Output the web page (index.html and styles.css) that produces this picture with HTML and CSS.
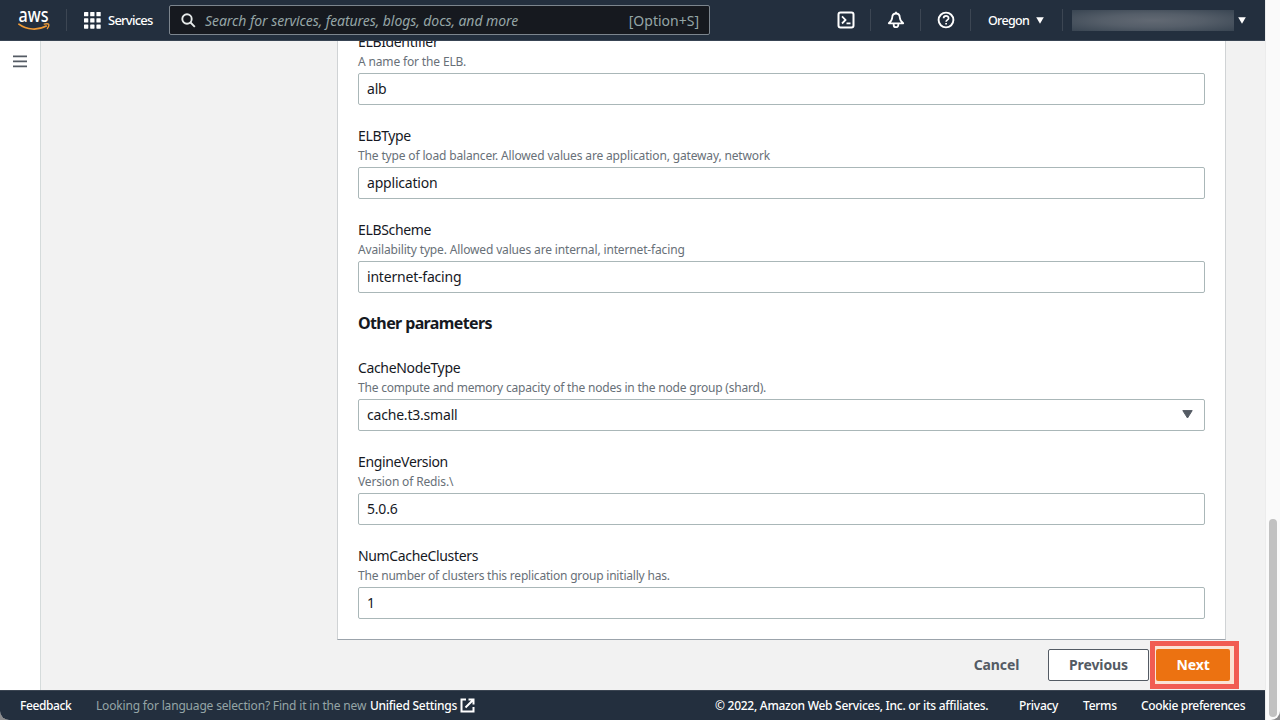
FILE: index.html
```
<!DOCTYPE html>
<html lang="en">
<head>
<meta charset="utf-8">
<title>Specify stack details</title>
<link rel="stylesheet" href="styles.css">
</head>
<body>
<div class="window">
  <div class="app">
    <header class="topbar">
      <svg class="logo" width="32" height="32" viewBox="0 -6 32 32">
        <text class="logo-text" x="0.6" y="11.5" textLength="30" lengthAdjust="spacingAndGlyphs">aws</text>
        <path d="M.9 14.200C8.500 20.200 20.500 20.400 28.300 16.100" fill="none" stroke="#f09a35" stroke-width="1.700" stroke-linecap="round"/>
        <path d="M26.200 14.200c1.900-.5 3.900-.5 4.500.1.400.9-.3 3-1.400 4.300" fill="none" stroke="#f09a35" stroke-width="1.300" stroke-linecap="round"/>
      </svg>
      <span class="rule after-logo"></span>
      <svg class="grid-icon" width="17" height="17" viewBox="0 0 17 17" fill="#fff">
        <rect width="4.300" height="4.300" rx=".6"/><rect x="6.200" width="4.300" height="4.300" rx=".6"/><rect x="12.400" width="4.300" height="4.300" rx=".6"/>
        <rect y="6.200" width="4.300" height="4.300" rx=".6"/><rect x="6.200" y="6.200" width="4.300" height="4.300" rx=".6"/><rect x="12.400" y="6.200" width="4.300" height="4.300" rx=".6"/>
        <rect y="12.400" width="4.300" height="4.300" rx=".6"/><rect x="6.200" y="12.400" width="4.300" height="4.300" rx=".6"/><rect x="12.400" y="12.400" width="4.300" height="4.300" rx=".6"/>
      </svg>
      <span class="services">Services</span>
      <div class="search">
        <svg width="15" height="15" viewBox="0 0 15 15" fill="none" stroke="#e6eaea" stroke-width="1.900"><circle cx="6" cy="6" r="4.700"/><path d="M9.500 9.500l4.300 4.300"/></svg>
        <span class="placeholder">Search for services, features, blogs, docs, and more</span>
        <span class="shortcut">[Option+S]</span>
      </div>
      <div class="tools">
        <div class="tool">
          <svg width="18" height="18" viewBox="0 0 18 18" fill="none" stroke="#fff" stroke-width="2"><rect x="1.500" y="1.500" width="15" height="15" rx="2"/><path d="M5 5.300L8.500 8.900 5 12.500M9.500 12.400h4" stroke-width="1.800"/></svg>
        </div>
        <div class="tool">
          <svg width="18" height="18" viewBox="0 0 18 18" fill="none" stroke="#fff" stroke-width="1.800" stroke-linejoin="round"><path d="M9 2.500C6.600 2.500 5.300 4 5.200 6.500 5 9.500 4 10.600 1.800 12.300h14.400C14 10.600 13 9.500 12.800 6.500 12.700 4 11.400 2.500 9 2.500zM9 .8v2M6.700 12.600v1.300a2.300 2.300 0 0 0 4.600 0v-1.300"/></svg>
        </div>
        <div class="tool">
          <svg width="18" height="18" viewBox="0 0 18 18" fill="none" stroke="#fff" stroke-width="1.900"><circle cx="9" cy="9" r="7.400"/><path d="M6.600 7.200c0-3.200 5-3.200 5 0 0 1.600-2.500 1.700-2.500 3.600M9.100 11.900v1.700" stroke-width="1.700"/></svg>
        </div>
        <div class="region"><span class="region-name">Oregon</span><svg width="8" height="7" viewBox="0 0 8 7"><path d="M.2.300h7.600L4 6.700z" fill="#fff"/></svg></div>
        <div class="account"><span class="account-name"></span><svg width="8" height="7" viewBox="0 0 8 7"><path d="M.2.300h7.600L4 6.700z" fill="#fff"/></svg></div>
      </div>
    </header>
    <main class="body">
      <aside class="sidebar">
        <svg width="14" height="13" viewBox="0 0 14 13" stroke="#545b64" stroke-width="1.800"><path d="M0 1.400h14M0 6.400h14M0 11.400h14"/></svg>
      </aside>
      <section class="content">
        <div class="card">
          <div class="field"><span class="label">ELBIdentifier</span><span class="hint">A name for the ELB.</span><div class="input">alb</div></div>
          <div class="field"><span class="label">ELBType</span><span class="hint">The type of load balancer. Allowed values are application, gateway, network</span><div class="input">application</div></div>
          <div class="field"><span class="label">ELBScheme</span><span class="hint">Availability type. Allowed values are internal, internet-facing</span><div class="input">internet-facing</div></div>
          <h3 class="group-title">Other parameters</h3>
          <div class="field"><span class="label">CacheNodeType</span><span class="hint tight">The compute and memory capacity of the nodes in the node group (shard).</span>
            <div class="input select"><span>cache.t3.small</span><svg width="11" height="9" viewBox="0 0 11 9"><path d="M.8.600h9.400L5.500 8z" fill="#545b64" stroke="#545b64" stroke-linejoin="round"/></svg></div></div>
          <div class="field"><span class="label">EngineVersion</span><span class="hint">Version of Redis.\</span><div class="input">5.0.6</div></div>
          <div class="field"><span class="label">NumCacheClusters</span><span class="hint tight">The number of clusters this replication group initially has.</span><div class="input">1</div></div>
        </div>
        <div class="actions">
          <span class="button cancel">Cancel</span>
          <span class="button previous">Previous</span>
          <span class="highlight"><span class="button next">Next</span></span>
        </div>
      </section>
    </main>
    <footer class="footer">
      <span class="feedback">Feedback</span>
      <span class="language">Looking for language selection? Find it in the new</span>
      <span class="unified">Unified Settings</span>
      <svg class="external" width="15" height="15" viewBox="0 0 15 15" fill="none" stroke="#fff" stroke-width="2"><path d="M6 1.500H1.500v12h12V9M8.500 1.500h5v5M13.300 1.700L5.500 9.500"/></svg>
      <span class="copyright">© 2022, Amazon Web Services, Inc. or its affiliates.</span>
      <span class="privacy">Privacy</span>
      <span class="terms">Terms</span>
      <span class="cookies">Cookie preferences</span>
    </footer>
  </div>
  <div class="scrollbar"><div class="thumb"></div></div>
</div>
</body>
</html>
```
FILE: styles.css
```
* { box-sizing: border-box; }
body { margin: 0; background: #8b8b8d; font-family: "Noto Sans", sans-serif; color: #16191f; font-size: 14px; white-space: nowrap; }
svg { display: block; flex: none; }
.window { display: flex; width: 1280px; height: 720px; overflow: hidden; border-radius: 0 0 9px 9px; }
.app { width: 1265px; display: flex; flex-direction: column; background: #f2f2f2; }
.topbar { height: 41px; flex: none; display: flex; align-items: center; background: #232f3e; color: #fff; border-bottom: 1px solid #384453; z-index: 1; }
.logo { margin-left: 18px; overflow: visible; }
.logo-text { font: 500 19px "Noto Sans", sans-serif; fill: #fff; }
.rule { width: 1px; height: 22px; background: #3c4653; }
.after-logo { margin-left: 16px; }
.grid-icon { margin-left: 17px; }
.services { margin-left: 7px; width: 61px; font-size: 13px; font-weight: 500; letter-spacing: -.75px; }
.search { width: 541px; height: 30px; border: 1px solid #7c858e; border-radius: 2px; background: #16191f; display: flex; align-items: center; padding: 0 10px 0 11px; color: #95a5a6; }
.placeholder { margin-left: 9px; font-style: italic; font-size: 14px; letter-spacing: -.07px; }
.shortcut { margin-left: auto; font-size: 14px; letter-spacing: 0; }
.tools { margin-left: 111px; display: flex; align-items: center; }
.tool { width: 50px; height: 22px; border-right: 1px solid #3c4653; display: flex; align-items: center; justify-content: center; }
.region { width: 92px; height: 22px; border-right: 1px solid #3c4653; display: flex; align-items: center; padding-left: 17px; gap: 7px; }
.region-name { width: 41px; font-size: 12.500px; font-weight: 500; letter-spacing: -.7px; }
.account { display: flex; align-items: center; gap: 4px; padding-left: 9px; }
.account-name { width: 162px; height: 21px; background: radial-gradient(ellipse at 50% 50%, #626973 0%, #555e69 45%, #394552 100%); }
.body { flex: 1; min-height: 0; display: flex; }
.sidebar { width: 41px; background: #fff; border-right: 1px solid #d5dbdb; padding: 14px 0 0 13px; }
.content { width: 1224px; padding-left: 296px; overflow: hidden; }
.card { width: 889px; height: 599px; background: #fff; border: 1px solid #d0d3d5; border-top: 0; border-bottom-color: #9ba3ab; padding: 0 20px; overflow: hidden; display: flex; flex-direction: column; }
.field { height: 94px; flex: none; display: flex; flex-direction: column; }
.field:first-child { height: 86px; margin-top: -8px; }
.field:first-child + .field { margin-top: 8px; }
.label { line-height: 18px; height: 20px; font-size: 14px; letter-spacing: -.35px; }
.hint { line-height: 18px; font-size: 12px; letter-spacing: -.15px; color: #687078; }
.tight { letter-spacing: -.2px; }
.input { height: 32px; margin-top: 2px; border: 1px solid #aab7b8; border-radius: 2px; padding: 0 8px 1px; line-height: 29px; font-size: 14px; letter-spacing: -.2px; display: flex; align-items: center; }
.select { justify-content: space-between; padding-right: 11px; }
.group-title { margin: 0; height: 44px; flex: none; line-height: 16px; font-size: 16px; font-weight: 700; letter-spacing: -.62px; }
.actions { height: 50px; display: flex; align-items: center; padding-bottom: 1px; }
.button { font-size: 14px; font-weight: 700; color: #545b64; height: 32px; display: flex; align-items: center; justify-content: center; letter-spacing: -.1px; padding-bottom: 1px; }
.cancel { margin-left: 637px; width: 45px; }
.previous { width: 101px; margin-left: 29px; border: 1px solid #545b64; border-radius: 2px; background: #fff; }
.highlight { flex: none; margin-left: 1px; width: 89px; height: 48px; border: 5px solid #f15c52; background: #fbe3d5; display: flex; align-items: center; padding-left: 1px; }
.next { width: 74px; background: #ec7211; color: #fff; border-radius: 2px; }
.footer { height: 30px; flex: none; display: flex; align-items: center; background: #232f3e; border-top: 1px solid #3b4552; color: #fff; font-size: 12px; font-weight: 500; letter-spacing: -.27px; }
.feedback { margin-left: 20px; width: 76px; letter-spacing: -.4px; }
.language { width: 274px; color: #95a5a6; font-weight: 400; letter-spacing: -.17px; }
.unified { width: 90px; }
.copyright { margin-left: 240px; width: 304px; }
.privacy { width: 64px; }
.terms { width: 58px; }
.cookies { letter-spacing: -.35px; }
.scrollbar { width: 15px; background: #fafafa; border-left: 1px solid #ececec; padding: 519px 3px 0 3px; }
.thumb { height: 198px; width: 8px; border-radius: 4px; background: #c1c1c1; }
```
